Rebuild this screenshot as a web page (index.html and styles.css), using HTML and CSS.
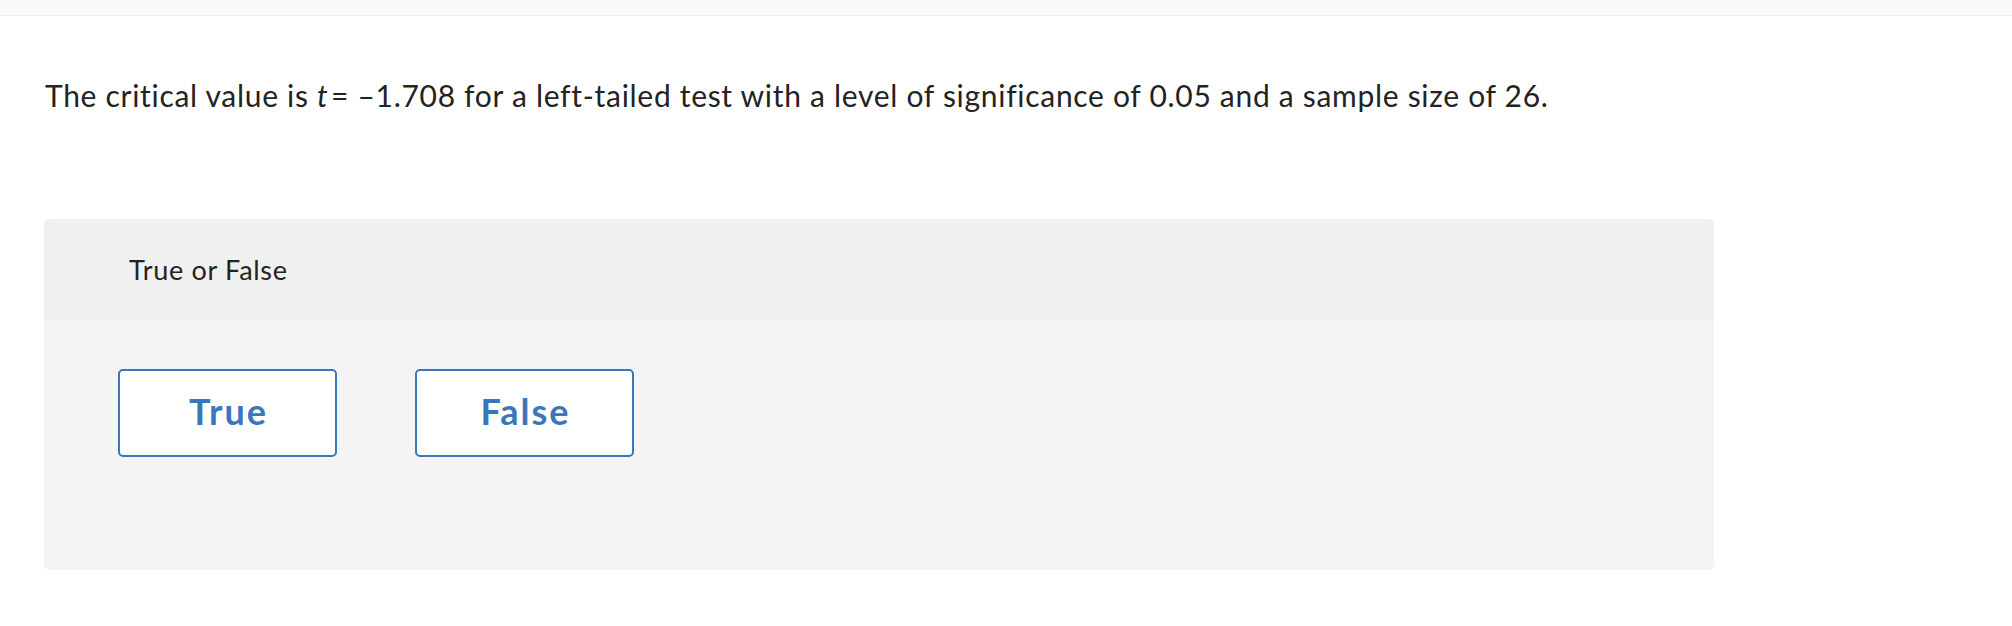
FILE: index.html
```html
<!DOCTYPE html>
<html lang="en">
<head>
<meta charset="utf-8">
<title>True or False</title>
<link rel="stylesheet" href="styles.css">
</head>
<body>
<div class="topbar"></div>
<main class="content">
  <p class="question">The critical value is <i class="var">t</i>&#8202;= –1.708 for a left-tailed test with a level of significance of 0.05 and a sample size of 26.</p>
  <section class="answer-box">
    <div class="answer-head">True or False</div>
    <div class="answer-body">
      <button class="choice" type="button">True</button>
      <button class="choice" type="button">False</button>
    </div>
  </section>
</main>
</body>
</html>
```

FILE: styles.css
```css
html, body {
  margin: 0;
  padding: 0;
  background: #ffffff;
}

body {
  font-family: "Lato", "Open Sans", "Liberation Sans", sans-serif;
  color: #232323;
}

.topbar {
  height: 15px;
  background: #fafafa;
  border-bottom: 1px solid #ebebeb;
}

.content {
  padding-left: 44px;
}

.question {
  margin: 0;
  padding-top: 61px;
  padding-left: 1px;
  font-size: 30px;
  line-height: 36px;
  letter-spacing: 0.7px;
  color: #232323;
}

.var {
  font-style: italic;
}

.answer-box {
  margin-top: 106px;
  width: 1670px;
  border-radius: 6px;
  overflow: hidden;
  background: #f4f4f4;
}

.answer-head {
  height: 100px;
  display: flex;
  align-items: center;
  padding-left: 85px;
  background: #f0f0f0;
  font-size: 27px;
  letter-spacing: 0.7px;
  color: #232323;
}

.answer-body {
  height: 251px;
  box-sizing: border-box;
  padding: 50px 0 0 74px;
  display: flex;
  align-items: flex-start;
  gap: 78px;
}

.choice {
  width: 219px;
  height: 88px;
  box-sizing: border-box;
  background: #ffffff;
  border: 2px solid #3a76ba;
  border-radius: 5px;
  font-family: "Lato", "Open Sans", "Liberation Sans", sans-serif;
  font-weight: 700;
  font-size: 36px;
  letter-spacing: 2px;
  color: #3a76ba;
  padding: 0 0 4px 2px;
  cursor: pointer;
}
```
